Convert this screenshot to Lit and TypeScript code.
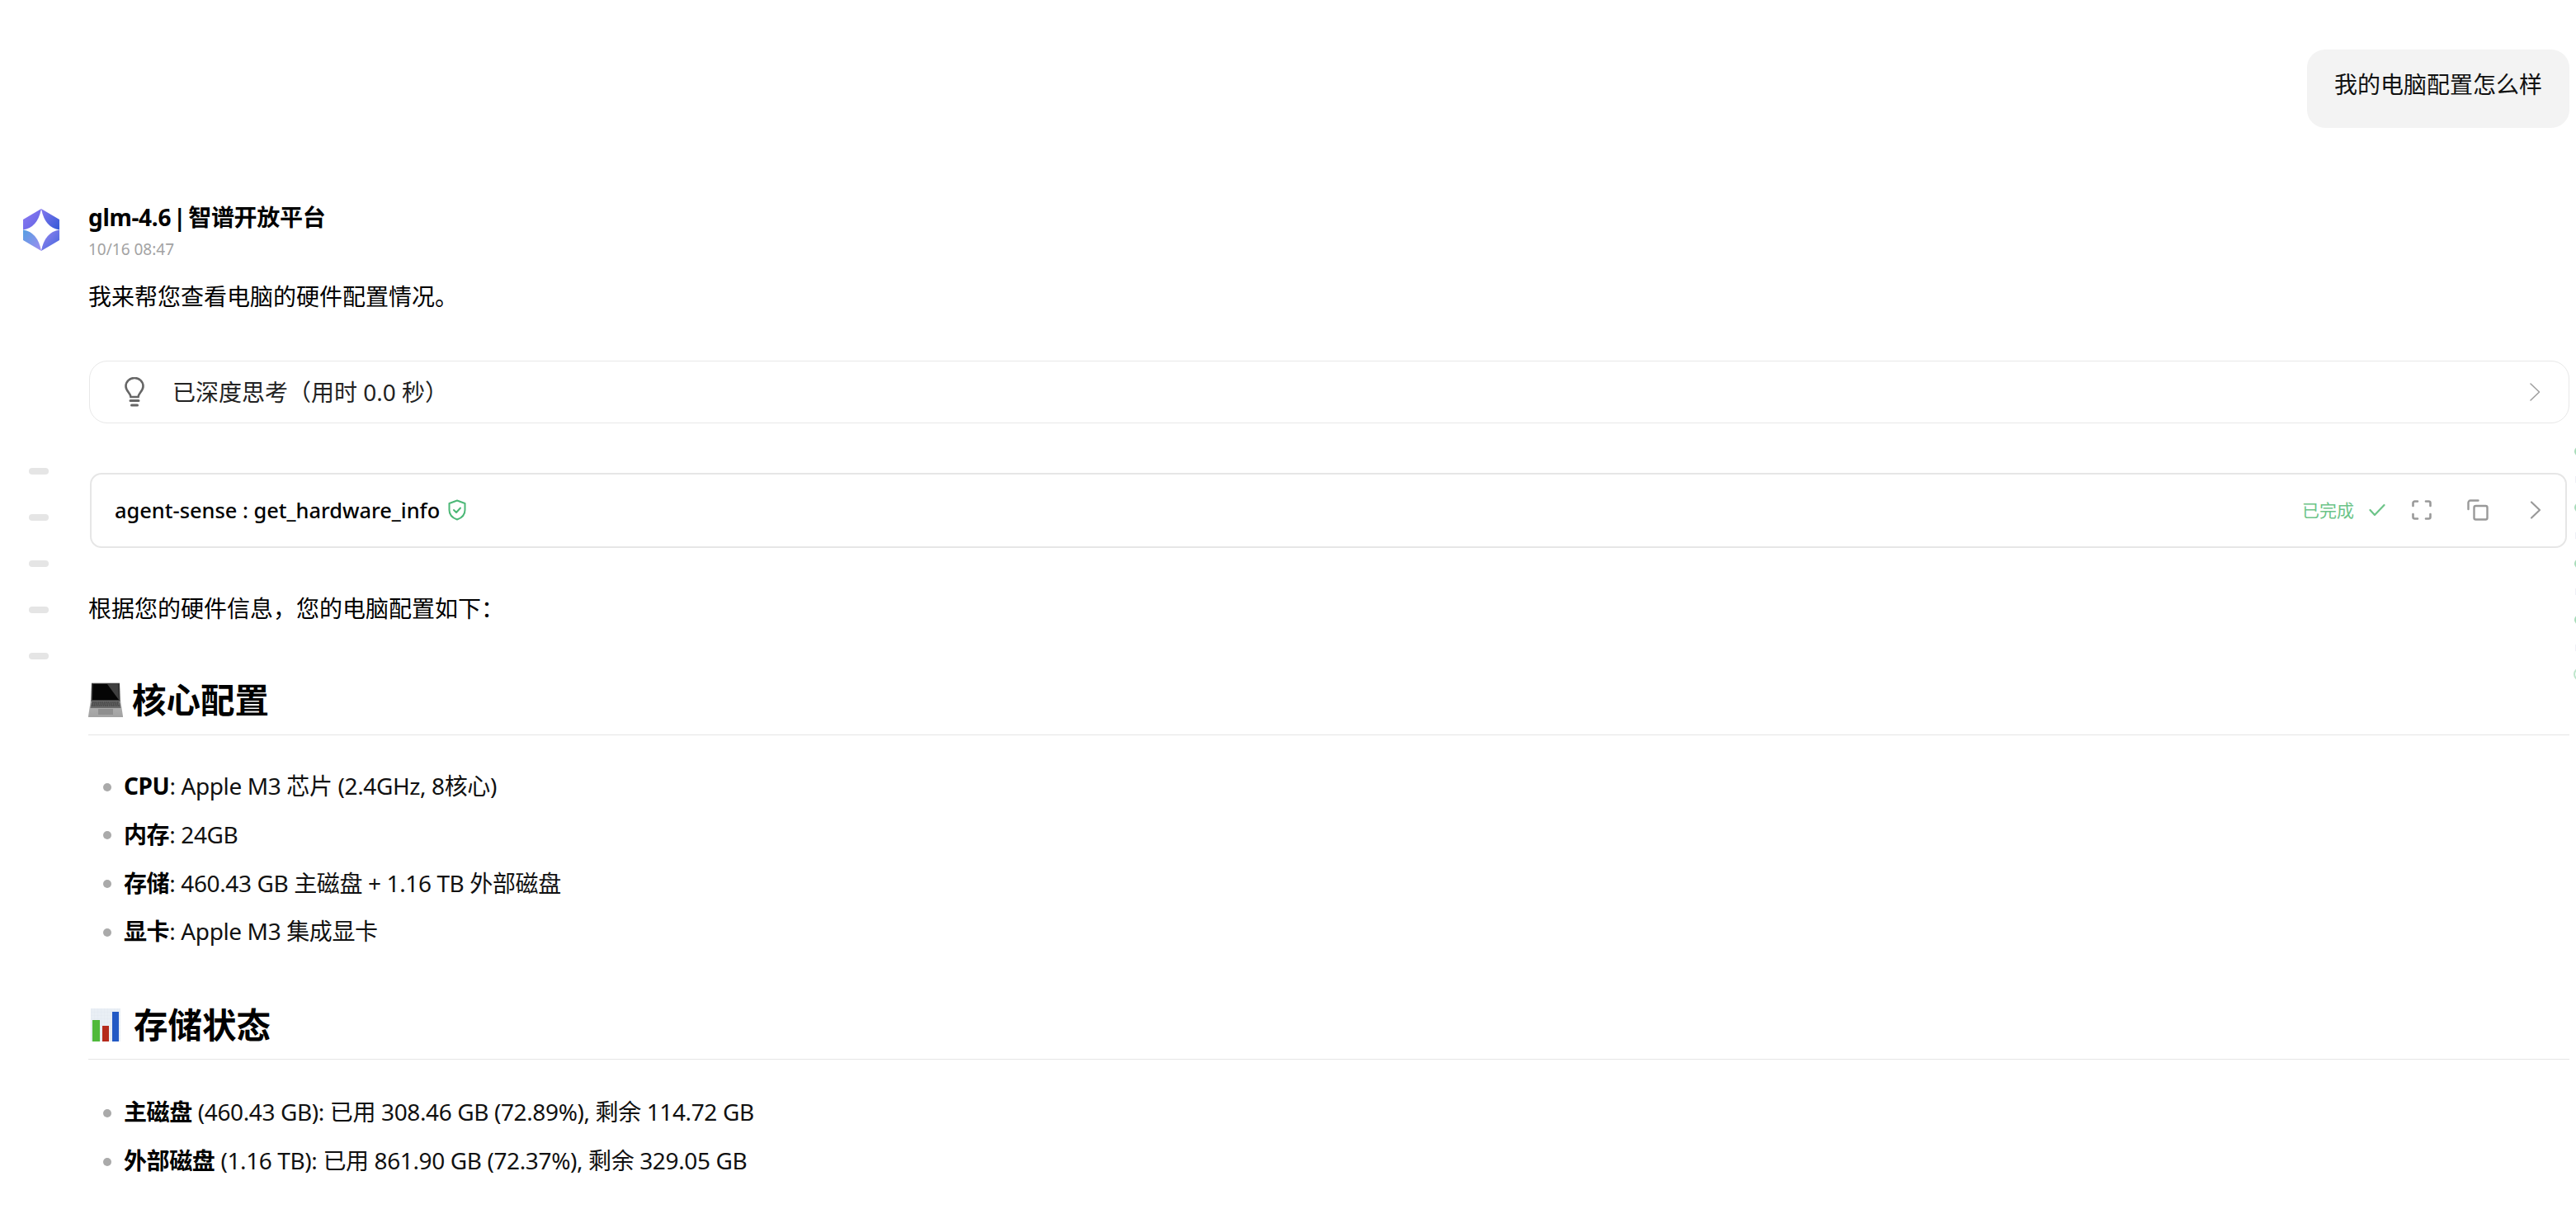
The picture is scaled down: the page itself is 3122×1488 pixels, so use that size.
import { LitElement, html, css } from "lit";
import { customElement } from "lit/decorators.js";

const core = [
  ["CPU", ": Apple M3 芯片 (2.4GHz, 8核心)"],
  ["内存", ": 24GB"],
  ["存储", ": 460.43 GB 主磁盘 + 1.16 TB 外部磁盘"],
  ["显卡", ": Apple M3 集成显卡"],
];

const storage = [
  ["主磁盘", " (460.43 GB): 已用 308.46 GB (72.89%), 剩余 114.72 GB"],
  ["外部磁盘", " (1.16 TB): 已用 861.90 GB (72.37%), 剩余 329.05 GB"],
];

const logo = html`<svg class="logo" viewBox="0 0 44 51" width="44" height="51">
  <defs>
    <linearGradient id="q1" x1="0" y1="0" x2="1" y2="1"><stop offset="0" stop-color="#8f7cf2" /><stop offset="1" stop-color="#5f62e4" /></linearGradient>
    <linearGradient id="q2" x1="0" y1="0" x2="1" y2="1"><stop offset="0" stop-color="#8478ee" /><stop offset="1" stop-color="#3259d6" /></linearGradient>
    <linearGradient id="q3" x1="0" y1="0" x2="1" y2="1"><stop offset="0" stop-color="#559fe2" /><stop offset="1" stop-color="#a08cf0" /></linearGradient>
    <linearGradient id="q4" x1="0" y1="0" x2="1" y2="1"><stop offset="0" stop-color="#9a88f0" /><stop offset="1" stop-color="#3f63dc" /></linearGradient>
  </defs>
  <path d="M22 0L0 13V25.5Q17.600 22.900 22 0Z" fill="url(#q1)" />
  <path d="M22 0L44 13V25.500Q26.400 22.900 22 0Z" fill="url(#q2)" />
  <path d="M22 51L0 38V25.500Q17.600 28.100 22 51Z" fill="url(#q3)" />
  <path d="M22 51L44 38V25.500Q26.400 28.100 22 51Z" fill="url(#q4)" />
</svg>`;

const bulb = html`<svg viewBox="0 0 24 36" width="24" height="36" fill="none" stroke="#666" stroke-width="2.600" stroke-linecap="round">
  <path d="M7.500 24C7 19 1.500 17 1.500 11A10.500 10 0 0 1 22.500 11C22.500 17 17 19 16.500 24Z" />
  <path d="M7 28.500H17M8.500 34H15.500" stroke-width="3" />
</svg>`;

const chevronThin = html`<svg viewBox="0 0 14 24" width="14" height="24" fill="none" stroke="#a0a0a0" stroke-width="1.600" stroke-linecap="round" stroke-linejoin="round">
  <path d="M2 2L12.500 12L2 22" />
</svg>`;

const chevron = html`<svg viewBox="0 0 14 24" width="14" height="24" fill="none" stroke="#999" stroke-width="2.200" stroke-linecap="round" stroke-linejoin="round">
  <path d="M2 2.500L12 12L2 21.500" />
</svg>`;

const shield = html`<svg viewBox="0 0 22 26" width="22" height="26" fill="none" stroke="#4cb877" stroke-width="2" stroke-linecap="round" stroke-linejoin="round">
  <path d="M11 1.500L20.500 5V13C20.500 19 16 22.800 11 24.500C6 22.800 1.500 19 1.500 13V5Z" />
  <path d="M7 13L10 16L15 10.500" />
</svg>`;

const check = html`<svg viewBox="0 0 20 16" width="20" height="16" fill="none" stroke="#6cc488" stroke-width="2.200" stroke-linecap="round" stroke-linejoin="round">
  <path d="M1.500 8L7 14L18.500 2" />
</svg>`;

const expand = html`<svg viewBox="0 0 24 24" width="24" height="24" fill="none" stroke="#999" stroke-width="2.600" stroke-linecap="round" stroke-linejoin="round">
  <path d="M1.500 7V3.500A2 2 0 0 1 3.500 1.500H7M17 1.500H20.500A2 2 0 0 1 22.500 3.500V7M22.500 17V20.500A2 2 0 0 1 20.500 22.500H17M7 22.500H3.500A2 2 0 0 1 1.500 20.500V17" />
</svg>`;

const copy = html`<svg viewBox="0 0 26 26" width="26" height="26" fill="none" stroke="#999" stroke-width="2.400" stroke-linecap="round" stroke-linejoin="round">
  <rect x="8.500" y="8" width="16" height="16.500" rx="2" />
  <path d="M1.500 12V4A2.500 2.500 0 0 1 4 1.500H13.500" />
</svg>`;

const laptop = html`<svg class="emoji" viewBox="0 0 42 42" width="42" height="42">
  <defs>
    <linearGradient id="base" x1="0" y1="0" x2="0" y2="1"><stop offset="0" stop-color="#c6c6c6" /><stop offset="1" stop-color="#a2a2a2" /></linearGradient>
  </defs>
  <path d="M4 0H38L39 21L42 41V42H0V41L3 21Z" fill="url(#base)" />
  <path d="M4 1H38L38.500 23H3.500Z" fill="#3a3a3a" />
  <path d="M5.500 2H36.500L37 21H5Z" fill="#050505" />
  <path d="M23 2H36.500L37 21Z" fill="#3f3f3f" />
  <path d="M4 22H38L39.500 31H2.500Z" fill="#6b6b6b" />
  <path d="M5 24H37M4.500 26H37.500M4 28H38" stroke="#2e2e2e" stroke-width="1.200" stroke-dasharray="1.600 .7" />
  <rect x="12" y="32" width="18" height="7" fill="#8f8f8f" />
</svg>`;

const chart = html`<svg class="emoji chart" viewBox="0 0 36 40" width="36" height="40">
  <defs>
    <pattern id="grid" width="4" height="4" patternUnits="userSpaceOnUse"><rect width="4" height="4" fill="#e9eff5" /><path d="M0 0H4M0 0V4" stroke="#dbe3ec" stroke-width=".6" /></pattern>
  </defs>
  <rect width="36" height="40" fill="url(#grid)" />
  <rect x="2" y="14" width="9" height="26" fill="#4fb93c" />
  <rect x="14" y="21" width="8" height="19" fill="#b52a1c" />
  <rect x="26" y="4" width="8" height="36" fill="#2259c4" />
</svg>`;

@customElement("app-root")
export class AppRoot extends LitElement {
  static styles = css`
    :host {
      display: block;
      position: relative;
      height: 1488px;
      overflow: hidden;
      background: #fff;
      color: #000;
      font-family: "Noto Sans", "Noto Sans CJK SC", sans-serif;
      font-size: 28px;
      line-height: 44px;
    }

    .user-row {
      display: flex;
      justify-content: flex-end;
      padding: 60px 8px 0 0;
    }

    .bubble {
      height: 95px;
      box-sizing: border-box;
      padding: 20px 33px 0;
      border-radius: 22px;
      background: #f3f3f3;
      color: #111;
    }

    .message {
      display: flex;
      gap: 35px;
      padding: 88px 8px 0 28px;
    }

    .logo {
      flex: none;
      margin-top: 10px;
    }

    .content {
      flex: 1;
      min-width: 0;
    }

    .title {
      font-weight: 700;
      line-height: 40px;
      letter-spacing: -0.300px;
      word-spacing: -4px;
    }

    .date {
      margin-top: 8px;
      font-size: 19px;
      line-height: 22px;
      color: #a3a3a3;
    }

    p {
      margin: 0;
    }

    .intro {
      margin-top: 24px;
    }

    .thinking {
      display: flex;
      align-items: center;
      height: 76px;
      box-sizing: border-box;
      margin: 56px 0 0 1px;
      padding: 0 34px 0 42px;
      border: 1px solid #e8e8e8;
      border-radius: 22px;
      color: #222;
    }

    .thinking span {
      flex: 1;
      margin-left: 34px;
    }

    .tool {
      display: flex;
      align-items: center;
      height: 91px;
      box-sizing: border-box;
      margin: 60px 3px 0 2px;
      padding: 0 29px 2px 28px;
      border: 2px solid #e6e6e6;
      border-radius: 14px;
    }

    .tool-name {
      font-size: 25.400px;
      font-weight: 500;
      margin-right: 10px;
    }

    .spacer {
      flex: 1;
    }

    .done {
      font-size: 21px;
      color: #6cc488;
      margin-right: 18px;
    }

    .tool .act {
      display: flex;
      margin-left: 32px;
    }

    .tool .act.wide {
      margin-left: 43px;
    }

    .tool .act.last {
      margin-left: 50px;
    }

    .lead {
      margin-top: 51px;
    }

    h2 {
      display: flex;
      align-items: center;
      gap: 11px;
      margin: 59px 0 0;
      padding-bottom: 12px;
      border-bottom: 1px solid #e5e5e5;
      font-size: 41.500px;
      font-weight: 700;
      line-height: 60px;
    }

    h2.second {
      margin-top: 62px;
      padding-bottom: 11px;
    }

    h2 .chart {
      margin: 0 5px 0 3px;
    }

    ul {
      display: flex;
      flex-direction: column;
      gap: 14.750px;
      margin: 39px 0 0;
      padding: 0 0 0 18px;
      list-style: none;
    }

    ul.second {
      margin-top: 41px;
    }

    li {
      display: flex;
      align-items: center;
      gap: 15px;
      white-space: pre;
      color: #111;
      letter-spacing: -0.380px;
    }

    li i {
      flex: none;
      width: 10px;
      height: 10px;
      margin-top: 3px;
      border-radius: 50%;
      background: #aaa;
    }

    li b {
      color: #000;
    }

    .outline {
      position: absolute;
      left: 35px;
      top: 567px;
      display: flex;
      flex-direction: column;
      gap: 48px;
    }

    .outline div {
      width: 24px;
      height: 8px;
      border-radius: 4px;
      background: #e5e5e5;
    }

    .steps {
      position: absolute;
      left: 3120px;
      top: 541px;
      display: flex;
      flex-direction: column;
      align-items: flex-start;
      gap: 24px;
    }

    .steps .dot {
      width: 12px;
      height: 12px;
      border-radius: 50%;
      background: #a8dcb9;
    }

    .steps .dash {
      width: 2px;
      height: 8px;
      margin-left: 0.500px;
      background: #eef0f5;
    }

    .steps .open {
      width: 12px;
      height: 12px;
      margin: -4px 0 0 -1px;
      border: 2px solid #bfe6cc;
      border-radius: 50%;
    }
  `;

  render() {
    return html`
      <div class="user-row"><div class="bubble">我的电脑配置怎么样</div></div>

      <div class="message">
        ${logo}
        <div class="content">
          <div class="title">glm-4.6 | 智谱开放平台</div>
          <div class="date">10/16 08:47</div>
          <p class="intro">我来帮您查看电脑的硬件配置情况。</p>

          <div class="thinking">
            ${bulb}
            <span>已深度思考（用时 0.0 秒）</span>
            ${chevronThin}
          </div>

          <div class="tool">
            <span class="tool-name">agent-sense : get_hardware_info</span>
            ${shield}
            <span class="spacer"></span>
            <span class="done">已完成</span>
            ${check}
            <span class="act">${expand}</span>
            <span class="act wide">${copy}</span>
            <span class="act last">${chevron}</span>
          </div>

          <p class="lead">根据您的硬件信息，您的电脑配置如下：</p>

          <h2>${laptop}核心配置</h2>
          <ul>
            ${core.map(([k, v]) => html`<li><i></i><span><b>${k}</b>${v}</span></li>`)}
          </ul>

          <h2 class="second">${chart}存储状态</h2>
          <ul class="second">
            ${storage.map(([k, v]) => html`<li><i></i><span><b>${k}</b>${v}</span></li>`)}
          </ul>
        </div>
      </div>

      <div class="outline">
        ${[0, 1, 2, 3, 4].map(() => html`<div></div>`)}
      </div>

      <div class="steps">
        ${[0, 1, 2, 3].map(
          () => html`<div class="dot"></div><div class="dash"></div>`
        )}
        <div class="open"></div>
      </div>
    `;
  }
}
